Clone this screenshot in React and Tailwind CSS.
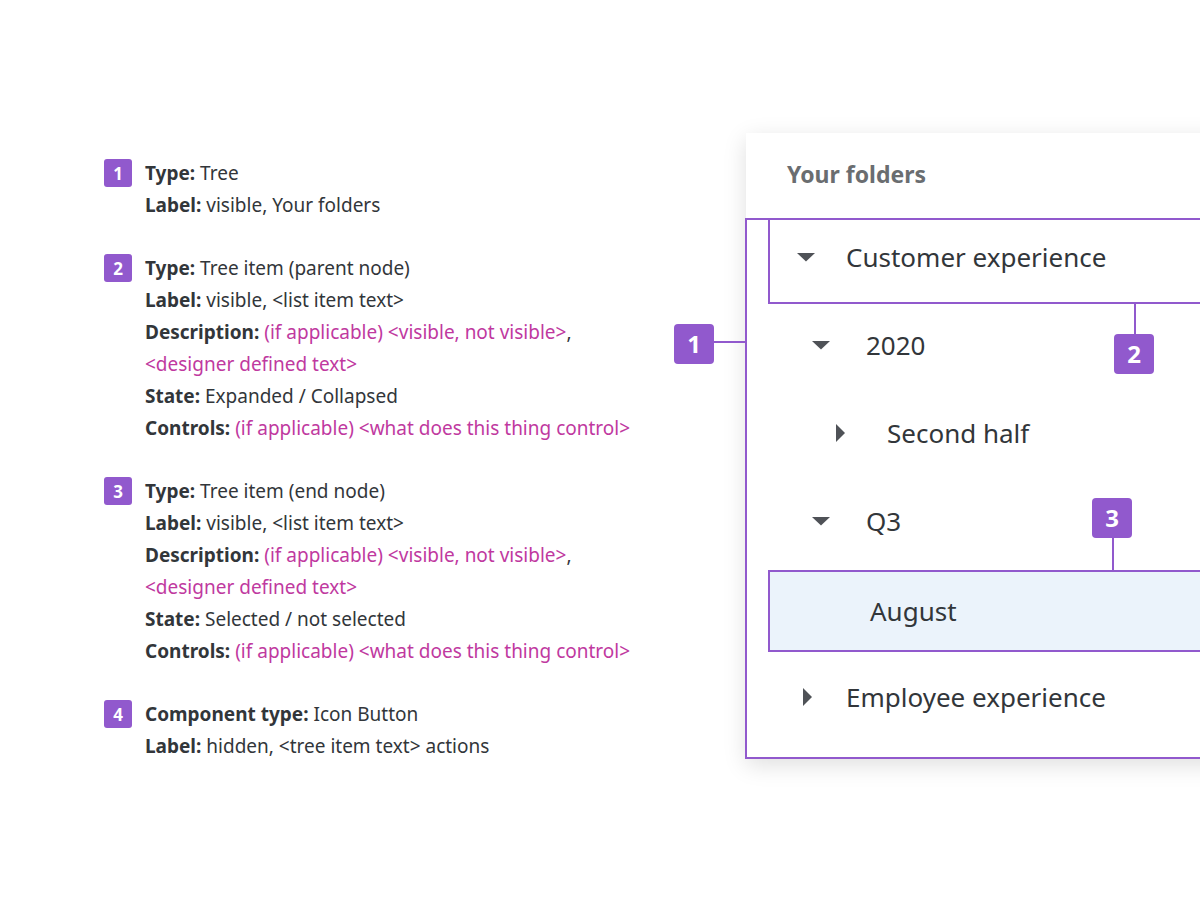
import React from 'react';

const FONT = { fontFamily: '"Noto Sans", "Open Sans", Arial, sans-serif' };

const notes = [
  {
    n: '1',
    lines: [
      [['Type:', 'b'], ['Tree', 't']],
      [['Label:', 'b'], ['visible, Your folders', 't']],
    ],
  },
  {
    n: '2',
    lines: [
      [['Type:', 'b'], ['Tree item (parent node)', 't']],
      [['Label:', 'b'], ['visible, <list item text>', 't']],
      [['Description:', 'b'], ['(if applicable) <visible, not visible>', 'p'], [',', 'c']],
      [['<designer defined text>', 'p']],
      [['State:', 'b'], ['Expanded / Collapsed', 't']],
      [['Controls:', 'b'], ['(if applicable) <what does this thing control>', 'p']],
    ],
  },
  {
    n: '3',
    lines: [
      [['Type:', 'b'], ['Tree item (end node)', 't']],
      [['Label:', 'b'], ['visible, <list item text>', 't']],
      [['Description:', 'b'], ['(if applicable) <visible, not visible>', 'p'], [',', 'c']],
      [['<designer defined text>', 'p']],
      [['State:', 'b'], ['Selected / not selected', 't']],
      [['Controls:', 'b'], ['(if applicable) <what does this thing control>', 'p']],
    ],
  },
  {
    n: '4',
    lines: [
      [['Component type:', 'b'], ['Icon Button', 't']],
      [['Label:', 'b'], ['hidden, <tree item text> actions', 't']],
    ],
  },
];

const Part = ({ text, kind, first }) => {
  const gap = first ? '' : kind === 'c' ? '' : ' ';
  if (kind === 'b') return <span className="font-bold">{gap}{text}</span>;
  if (kind === 'p') return <span className="text-[#c0399f]">{gap}{text}</span>;
  return <span>{gap}{text}</span>;
};

const DownCaret = () => (
  <svg width="18" height="9" viewBox="0 0 18 9" className="block">
    <path d="M0 0 L18 0 L9 8.5 Z" fill="#4f5257" />
  </svg>
);

const RightCaret = () => (
  <svg width="9" height="18" viewBox="0 0 9 18" className="block">
    <path d="M0 0 L9 9 L0 18 Z" fill="#4f5257" />
  </svg>
);

const rows = [
  { label: 'Customer experience', caret: 'down', pad: 'pl-[51px]', gap: 'w-[49px]' },
  { label: '2020', caret: 'down', pad: 'pl-[66px]', gap: 'w-[54px]' },
  { label: 'Second half', caret: 'right', pad: 'pl-[90px]', gap: 'w-[51px]' },
  { label: 'Q3', caret: 'down', pad: 'pl-[66px]', gap: 'w-[54px]' },
  { label: 'August', selected: true },
  { label: 'Employee experience', caret: 'right', pad: 'pl-[57px]', gap: 'w-[43px]' },
];

const Badge = ({ n, className }) => (
  <div className={`absolute w-[40px] h-[40px] rounded-[4px] bg-[#9159cd] text-white text-[24px] font-bold flex items-center justify-center ${className}`}>
    {n}
  </div>
);

export default function App() {
  return (
    <div className="w-[1200px] h-[908px] bg-white overflow-hidden flex text-[#32363a]" style={FONT}>
      {/* Notes */}
      <div className="w-[746px] shrink-0 pl-[104px] pt-[157px] flex flex-col gap-[31px] text-[19px] leading-[32px]">
        {notes.map(note => (
          <div key={note.n} className="flex">
            <div className="w-[28px] h-[28px] mt-[2px] rounded-[3px] bg-[#9159cd] text-white text-[17px] font-bold flex items-center justify-center shrink-0 leading-none">
              {note.n}
            </div>
            <div className="ml-[13px] whitespace-nowrap">
              {note.lines.map((line, i) => (
                <div key={i}>
                  {line.map(([text, kind], j) => (
                    <Part key={j} text={text} kind={kind} first={j === 0} />
                  ))}
                </div>
              ))}
            </div>
          </div>
        ))}
      </div>

      {/* Tree panel */}
      <div className="relative shrink-0 w-[520px] h-[626px] mt-[133px] bg-white shadow-[0_6px_22px_rgba(0,0,0,0.13)]">
        <div className="h-[80px] pl-[41px] pt-[3px] flex items-center text-[23px] font-bold text-[#6a6d70]">
          Your folders
        </div>

        <div className="relative z-10">
          {rows.map(row =>
            row.selected ? (
              <div key={row.label} className="h-[88px] pt-[5px]">
                <div className="ml-[22px] h-[82px] bg-[#ebf3fb] border-2 border-[#9159cd] flex items-center pl-[100px] text-[26px]">
                  {row.label}
                </div>
              </div>
            ) : (
              <div key={row.label} className={`h-[88px] flex items-center text-[26px] ${row.pad}`}>
                <div className={`shrink-0 ${row.gap}`}>
                  {row.caret === 'down' ? <DownCaret /> : <RightCaret />}
                </div>
                <span>{row.label}</span>
              </div>
            )
          )}
        </div>

        {/* Annotation 1: tree */}
        <div className="absolute left-[-1px] top-[85px] right-0 bottom-0 border-2 border-[#9159cd] z-20 pointer-events-none"></div>
        <div className="absolute left-[-32px] top-[208px] w-[31px] h-[2px] bg-[#9159cd]"></div>
        <Badge n="1" className="left-[-72px] top-[191px]" />

        {/* Annotation 2: parent node */}
        <div className="absolute left-[22px] top-[85px] right-0 h-[86px] border-2 border-[#9159cd] z-20 pointer-events-none"></div>
        <div className="absolute left-[388px] top-[170px] w-[2px] h-[32px] bg-[#9159cd] z-20"></div>
        <Badge n="2" className="left-[368px] top-[201px] z-20" />

        {/* Annotation 3: end node */}
        <div className="absolute left-[366px] top-[404px] w-[2px] h-[34px] bg-[#9159cd] z-20"></div>
        <Badge n="3" className="left-[346px] top-[365px] z-20" />
      </div>
    </div>
  );
}
